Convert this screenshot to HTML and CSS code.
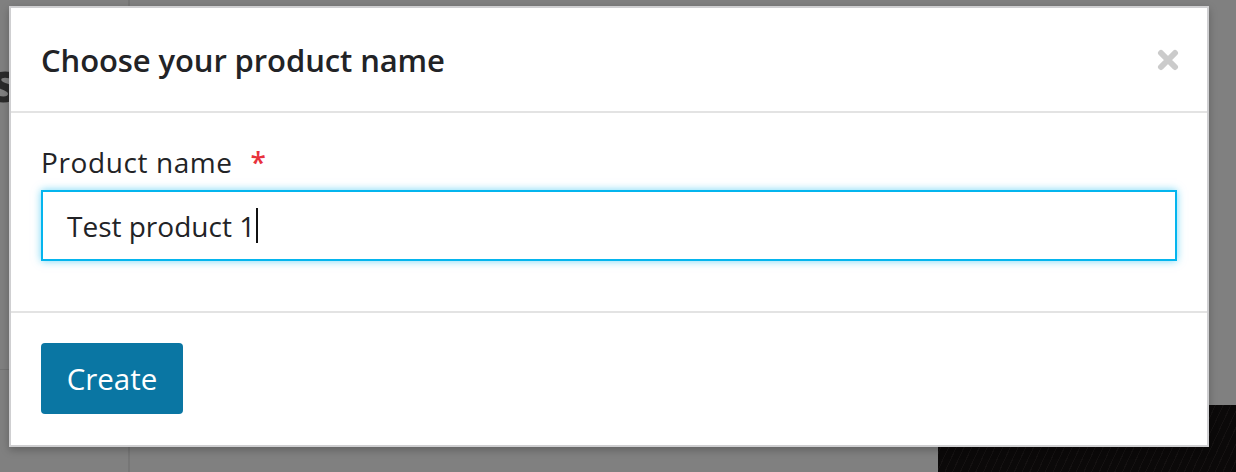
FILE: index.html
```html
<!DOCTYPE html>
<html>
<head>
<meta charset="utf-8">
<link rel="stylesheet" href="styles.css">
</head>
<body>
<div class="page">
  <aside class="sidebar">
    <h1 class="page-title">Products</h1>
    <div class="rule"></div>
  </aside>
  <main class="main">
    <div class="hero"></div>
  </main>
</div>
<div class="modal">
  <div class="modal-header">
    <h2 class="modal-title">Choose your product name</h2>
    <button class="close" aria-label="Close">
      <svg width="22" height="22" viewBox="0 0 22 22"><path d="M4 4L18 18M18 4L4 18" stroke="#cbcbcb" stroke-width="6" stroke-linecap="round"/></svg>
    </button>
  </div>
  <div class="modal-body">
    <label class="label">Product name <span class="req">*</span></label>
    <div class="input"><span>Test product 1</span><span class="caret"></span></div>
  </div>
  <div class="modal-footer">
    <button class="btn">Create</button>
  </div>
</div>
</body>
</html>
```
FILE: styles.css
```css
html, body { margin: 0; padding: 0; }
body {
  background: #808080;
  font-family: "Open Sans", Lato, sans-serif;
  width: 1236px;
  height: 472px;
  overflow: hidden;
  position: relative;
}
.page { display: flex; height: 472px; }
.sidebar {
  width: 128px;
  border-right: 2px solid #767676;
  flex: none;
  overflow: hidden;
}
.main { flex: 1; position: relative; }
.page-title {
  margin: 50px 0 0 -230px;
  width: 240px;
  text-align: right;
  font-size: 56px;
  line-height: 60px;
  color: #2b2b2b;
  font-weight: 700;
  white-space: nowrap;
}
.rule { margin-top: 259px; height: 1px; background: #747474; }
.hero {
  position: absolute;
  left: 808px; top: 405px; right: 0; bottom: 0;
  background: repeating-linear-gradient(115deg, #0b0909 0 6px, #141111 6px 7px);
}
.modal {
  position: absolute;
  left: 9px; top: 6px;
  width: 1200px;
  box-sizing: border-box;
  border: 2px solid #cfcfd1;
  background: #fff;
  box-shadow: 0 3px 8px rgba(0,0,0,0.25);
}
.modal-header {
  height: 103px;
  padding: 0 30px;
  display: flex;
  align-items: center;
  justify-content: space-between;
  border-bottom: 2px solid #e3e3e3;
}
.modal-title {
  margin: 0;
  font-size: 31px;
  font-weight: 600;
  color: #222326;
  letter-spacing: -0.1px;
}
.close {
  border: 0; background: none; padding: 0; margin-right: -2px;
  width: 22px; height: 22px; display: block;
}
.modal-body {
  padding: 31px 30px 50px;
  border-bottom: 2px solid #e3e3e3;
}
.label {
  display: block;
  font-size: 28px;
  letter-spacing: 0.6px;
  color: #222326;
  line-height: 36px;
  margin-bottom: 10px;
}
.req { color: #e8323c; margin-left: 10px; font-weight: 600; }
.input {
  box-sizing: border-box;
  height: 71px;
  border: 2px solid #04b5ee;
  box-shadow: 0 0 8px rgba(4,181,238,0.55);
  padding: 0 24px;
  display: flex;
  align-items: center;
  font-size: 28px;
  color: #222326;
}
.caret { width: 2px; height: 35px; background: #111; margin-left: 1px; }
.modal-footer { padding: 30px 30px 31px; }
.btn {
  border: 0;
  background: #0a76a3;
  color: #fff;
  font-family: inherit;
  font-size: 29.5px;
  width: 142px;
  height: 71px;
  border-radius: 4px;
  display: block;
}
```
